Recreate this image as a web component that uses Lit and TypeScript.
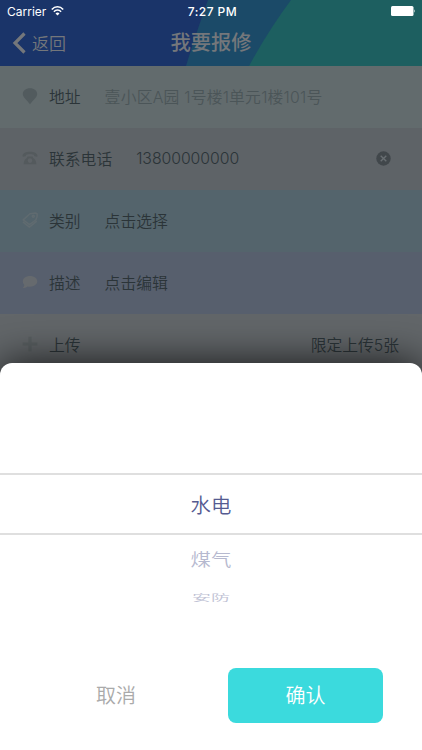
import { LitElement, html, css, svg } from "lit";
import { customElement, property } from "lit/decorators.js";

const icons: Record<string, unknown> = {
  pin: svg`<path d="M8 16.300C5.400 12.800.8 9.600.8 6.100C.8 2.600 3.800.2 8 .2s7.200 2.400 7.200 5.900c0 3.500-4.600 6.700-7.200 10.200z" fill="#525b5e"/>`,
  phone: svg`<path d="M.5 5.500C1 3.200 4 1.800 8 1.800s7 1.400 7.500 3.700l-.3 1.200-2.800-.4-.6-1.600c-2.200-.9-5.400-.9-7.600 0l-.6 1.600-2.800.4z" fill="#545a5d"/><path fill-rule="evenodd" d="M5.500 6.600h5l.7 1.300c1.800 1.200 3 3 3.200 6.300H1.600c.2-3.300 1.400-5.100 3.200-6.300zM8 8.300a2.300 2.300 0 1 0 0 4.600a2.300 2.300 0 0 0 0-4.600z" fill="#545a5d"/>`,
  tag: svg`<g fill="none" stroke="#606b70" stroke-width="1.500" stroke-linejoin="round"><path d="M8 1.800L13.500 1l1.700 1-.2 3-1.200 3-6.300 4.700L1.200 7.900z"/><path d="M.9 9.800l6.500 5.300 7.300-6"/><circle cx="11.300" cy="4.300" r="1"/></g>`,
  bubble: svg`<path d="M8 1.900c4.200 0 7.300 2.300 7.300 5.400S12.200 12.700 8 12.700c-.9 0-1.700-.1-2.500-.3-1.300 1-2.800 1.500-4.700 1.500 1-.9 1.500-1.900 1.500-3C1.300 10 .8 8.700.8 7.300.8 4.200 3.800 1.900 8 1.900z" fill="#666a6e"/>`,
  plus: svg`<path d="M6.400.7h3.200v5.700h5.700v3.200H9.600v5.700H6.400V9.600H.7V6.400h5.700z" fill="#595f61"/>`,
};

@customElement("form-row")
class FormRow extends LitElement {
  @property() icon = "";
  @property() label = "";
  @property() value = "";

  static styles = css`
    :host { display: flex; align-items: center; box-sizing: border-box; height: 62px; padding: 0 23px 2px 22px; font-size: 15.800px; color: #2b3438; }
    .icon { width: 16px; height: 16px; margin-right: 11px; flex: none; overflow: visible; }
    .value { margin-left: 24px; flex: 1; color: var(--value, inherit); letter-spacing: var(--spacing, normal); }
  `;

  render() {
    return html`<svg class="icon" viewBox="0 0 16 16">${icons[this.icon]}</svg>
      <span>${this.label}</span><span class="value">${this.value}</span><slot></slot>`;
  }
}

@customElement("app-root")
class AppRoot extends LitElement {
  static styles = css`
    :host { display: flex; flex-direction: column; position: relative; width: 422px; height: 750px; overflow: hidden; background: #626669; font-family: Inter, "Noto Sans CJK SC", sans-serif; font-weight: 350; white-space: nowrap; }
    .header { position: relative; height: 66px; flex: none; background: #1a3469; }
    .backdrop { position: absolute; inset: 0; width: 422px; height: 66px; }
    .status { position: relative; display: grid; grid-template-columns: 1fr auto 1fr; align-items: center; height: 22px; padding: 0 6px 0 7px; color: #fff; font-size: 12px; font-weight: 400; }
    .carrier { display: flex; align-items: center; gap: 5px; }
    .time { font-weight: 500; font-size: 12px; letter-spacing: .45px; margin-left: 2px; }
    .battery { justify-self: end; }
    .nav { position: relative; display: grid; grid-template-columns: 1fr auto 1fr; align-items: center; height: 40px; padding: 0 12px; color: #74777b; }
    .back { display: flex; align-items: center; gap: 6px; font-size: 17px; }
    .back svg { margin-top: 2px; }
    .title { font-size: 20.300px; font-weight: 500; padding-bottom: 2px; }
    .address { background: #626b6d; --value: #4b5558; --spacing: .22px; }
    .contact { background: #5e6367; --spacing: -.05px; }
    .category { background: #54646c; }
    .describe { background: #575f6d; }
    .upload { background: #626669; }
    .clear { margin-right: 8px; }
    .sheet { position: absolute; left: 0; right: 0; top: 363px; bottom: 0; display: flex; flex-direction: column; background: #fff; border-radius: 12px 12px 0 0; box-shadow: 0 0 40px rgba(0,0,0,.8); }
    .picker { margin-top: 110px; height: 194.500px; text-align: center; color: #555b91; font-size: 20.400px; }
    .selected { box-sizing: border-box; height: 62px; padding-bottom: 1px; border-top: 2px solid #dfdfdf; border-bottom: 2px solid #dfdfdf; display: flex; align-items: center; justify-content: center; }
    .next { height: 30px; line-height: 30px; margin-top: 10px; color: #b6b9cf; transform: scaleY(.84); }
    .far { height: 30px; line-height: 30px; margin-top: 8px; font-size: 19px; color: #c0c2d4; transform: scaleY(.48); }
    .actions { display: flex; height: 55px; font-size: 20px; }
    .cancel, .confirm { display: flex; align-items: center; justify-content: center; box-sizing: border-box; padding-bottom: 1px; }
    .cancel { width: 154px; margin-left: 39px; margin-right: 35px; color: #aaa; }
    .confirm { width: 155px; background: #3bdadd; color: #fff; border-radius: 8px; }
  `;

  render() {
    return html`
      <div class="header">
        <svg class="backdrop" viewBox="0 0 422 66">
          <path d="M208 0Q195 36 186 66H422V0z" fill="#1b4a68"/>
          <path d="M291 0Q268 31 249 66H422V0z" fill="#1d5f60"/>
        </svg>
        <div class="status">
          <span class="carrier">Carrier
            <svg width="13" height="10" viewBox="0 0 13 10"><g fill="none" stroke="#fff" stroke-width="1.600"><path d="M.8 3.500C4-.1 9-.1 12.200 3.500M2.900 5.700c2.100-2.200 5.100-2.200 7.200 0"/></g><path d="M4.500 7.400c1.200-1.200 2.800-1.200 4 0l-2 2.200z" fill="#fff"/></svg>
          </span>
          <span class="time">7:27 PM</span>
          <svg class="battery" width="25" height="10" viewBox="0 0 25 10"><rect width="22.500" height="10" rx="1.500" fill="#fff"/><path d="M23.300 3.300q1.500 1.700 0 3.400z" fill="#fff"/></svg>
        </div>
        <div class="nav">
          <span class="back"><svg width="14" height="22" viewBox="0 0 14 22"><path d="M12.500 1.500L3 11l9.500 9.500" fill="none" stroke="#74777b" stroke-width="3.200"/></svg>返回</span>
          <span class="title">我要报修</span>
        </div>
      </div>
      <form-row class="address" icon="pin" label="地址" value="壹小区A园 1号楼1单元1楼101号"></form-row>
      <form-row class="contact" icon="phone" label="联系电话" value="13800000000">
        <svg class="clear" width="15" height="15" viewBox="0 0 15 15"><circle cx="7.500" cy="7.500" r="7.200" fill="#41474b"/><path d="M4.700 4.700l5.600 5.600M10.300 4.700l-5.600 5.600" stroke="#686e72" stroke-width="1.400"/></svg>
      </form-row>
      <form-row class="category" icon="tag" label="类别" value="点击选择"></form-row>
      <form-row class="describe" icon="bubble" label="描述" value="点击编辑"></form-row>
      <form-row class="upload" icon="plus" label="上传">限定上传5张</form-row>
      <div class="sheet">
        <div class="picker">
          <div class="selected">水电</div>
          <div class="next">煤气</div>
          <div class="far">安防</div>
        </div>
        <div class="actions"><div class="cancel">取消</div><div class="confirm">确认</div></div>
      </div>`;
  }
}
